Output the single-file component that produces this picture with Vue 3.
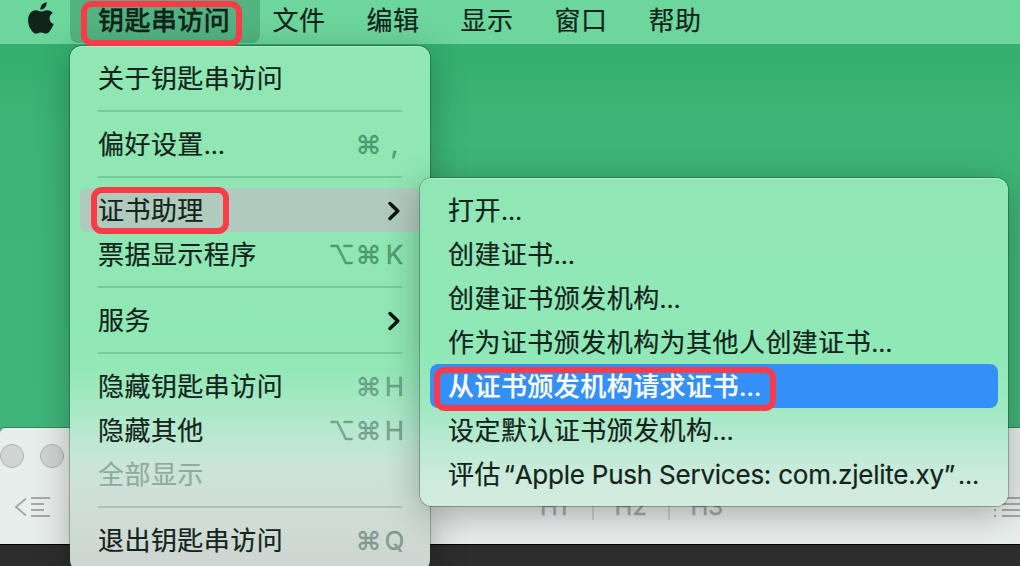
<script setup>
const barItems = ['文件', '编辑', '显示', '窗口', '帮助']

const appMenu = [
  { label: '关于钥匙串访问' },
  { sep: true },
  { label: '偏好设置', tail: '…', keys: ['⌘', ','] },
  { sep: true },
  { label: '证书助理', sub: true, open: true },
  { label: '票据显示程序', keys: ['⌥', '⌘', 'K'] },
  { sep: true },
  { label: '服务', sub: true },
  { sep: true },
  { label: '隐藏钥匙串访问', keys: ['⌘', 'H'] },
  { label: '隐藏其他', keys: ['⌥', '⌘', 'H'] },
  { label: '全部显示', disabled: true },
  { sep: true },
  { label: '退出钥匙串访问', keys: ['⌘', 'Q'] },
]

const assistantMenu = [
  { label: '打开', tail: '…' },
  { label: '创建证书', tail: '…' },
  { label: '创建证书颁发机构', tail: '…' },
  { label: '作为证书颁发机构为其他人创建证书', tail: '…' },
  { label: '从证书颁发机构请求证书', tail: '…', active: true },
  { label: '设定默认证书颁发机构', tail: '…' },
  { label: '评估', latin: '“Apple Push Services: com.zjelite.xy”', tail: '…' },
]
</script>

<template>
  <div class="desktop">
    <header class="menubar">
      <svg class="apple" viewBox="0 0 26 32" width="26" height="32">
        <path d="M18.6 0.2c.3 2-.6 4-1.7 5.400-1.100 1.400-2.900 2.400-4.500 2.200-.3-1.900.6-3.900 1.700-5.200C15.200 1.300 17.100.3 18.600.2z" />
        <path d="M24.900 11.100c-2.200 1.300-3.300 3.200-3.300 5.300 0 2.600 1.500 4.700 4.100 5.700-.6 1.900-1.600 3.800-2.900 5.600-1.400 2-2.700 3.900-4.800 3.900-2 0-2.700-1.200-5-1.200s-3.200 1.200-5.100 1.200c-2.100.1-3.600-2-5-4C.100 23.700-1.100 16.600 1.500 12.200c1.400-2.400 3.800-3.900 6.300-3.900 2.200 0 3.900 1.300 5.300 1.300 1.300 0 3.500-1.500 6-1.400 2.500.1 4.500 1.100 5.800 2.900z" />
      </svg>
      <div class="app-title">钥匙串访问</div>
      <nav class="bar-items">
        <span v-for="b in barItems" :key="b">{{ b }}</span>
      </nav>
    </header>

    <section class="window">
      <div class="lights"><i></i><i></i></div>
      <div class="toolbar">
        <svg class="outdent" width="37" height="22" viewBox="0 0 37 22">
          <path d="M12 2.500 2 11l10 8.500" />
          <path d="M17 2h19M17 8h13M17 14h13M17 20h19" />
        </svg>
        <div class="headings">
          <span>H1</span><b></b><span>H2</span><b></b><span>H3</span>
        </div>
        <svg class="list" width="30" height="22" viewBox="0 0 30 22">
          <path d="M0 2h2M0 8h2M0 14h2M0 20h2M8 2h22M8 8h22M8 14h22M8 20h22" />
        </svg>
      </div>
    </section>
    <div class="dark"></div>

    <div class="menu main">
      <template v-for="(m, i) in appMenu" :key="i">
        <div v-if="m.sep" class="sep"></div>
        <div v-else class="item" :class="{ open: m.open, disabled: m.disabled }">
          <span class="label">{{ m.label }}<span v-if="m.tail" class="tail">{{ m.tail }}</span></span>
          <span v-if="m.keys" class="keys"><kbd v-for="(k, n) in m.keys" :key="n">{{ k }}</kbd></span>
          <svg v-if="m.sub" class="chev" width="14" height="22" viewBox="0 0 14 22">
            <path d="M3 3.500 10.800 11 3 18.500" />
          </svg>
        </div>
      </template>
    </div>

    <div class="menu submenu">
      <div v-for="m in assistantMenu" :key="m.label" class="item" :class="{ active: m.active }">
        <span class="label">{{ m.label }}<span v-if="m.latin" class="latin">{{ m.latin }}</span><span class="tail">{{ m.tail }}</span></span>
      </div>
    </div>

    <div class="mark mark-title"></div>
    <div class="mark mark-assistant"></div>
    <div class="mark mark-request"></div>
  </div>
</template>

<style>
body {
  overflow: hidden;
}
</style>

<style scoped>
.desktop {
  position: relative;
  display: flex;
  flex-direction: column;
  width: 1020px;
  height: 566px;
  overflow: hidden;
  box-sizing: border-box;
  background: linear-gradient(#34af6d 44px, #3db576 130px, #41b67a 428px);
  font-family: Inter, "Noto Sans CJK SC", sans-serif;
  font-size: 26px;
  letter-spacing: 0.45px;
  color: #14241b;
  white-space: nowrap;
}
.menubar {
  flex: none;
  display: flex;
  height: 44px;
  line-height: 42px;
  background: #6dd69d;
  -webkit-text-stroke: 0.2px currentColor;
}
.apple {
  flex: none;
  margin: 2px 16px 0 28px;
  fill: #10241a;
}
.app-title {
  width: 162px;
  height: 43px;
  padding-left: 28px;
  border-radius: 0 0 8px 8px;
  background: #53b481;
  line-height: 41px;
  font-weight: 500;
  -webkit-text-stroke: 0.3px #0f2418;
}
.bar-items {
  display: flex;
  gap: 41.1px;
  margin-left: 12.500px;
}
.window {
  flex: none;
  height: 116px;
  margin-top: 384px;
  border-radius: 5px 0 0 0;
  background: #e8eeec;
  box-shadow: 0 -1px 0 #2f8659;
  box-sizing: border-box;
  padding-top: 16px;
}
.lights {
  display: flex;
  gap: 16px;
}
.lights i {
  width: 24px;
  height: 24px;
  box-sizing: border-box;
  border: 1px solid #aeb3b1;
  border-radius: 50%;
  background: #d0d5d3;
}
.toolbar {
  display: flex;
  align-items: center;
  height: 22px;
  margin-top: 28px;
}
.toolbar svg {
  flex: none;
  fill: none;
  stroke: #a5aaa8;
  stroke-width: 2;
}
.outdent {
  margin-left: 14px;
}
.headings {
  display: flex;
  align-items: center;
  margin-left: 489px;
  width: 452px;
  font-size: 24px;
  letter-spacing: 0;
  color: #a5aaa8;
  line-height: 22px;
}
.headings span {
  width: 52px;
  box-sizing: border-box;
  -webkit-text-stroke: 0.4px currentColor;
}
.headings span + b + span {
  width: 74.500px;
  padding-left: 21px;
}
.headings b {
  width: 1.500px;
  height: 26px;
  background: #ccd1cf;
}
.dark {
  flex: 1;
  background: #2d2d2d;
  border-top: 1px solid #000;
}
.menu {
  position: absolute;
  box-sizing: border-box;
  padding: 10px;
  border-radius: 12px;
}
.main {
  left: 70px;
  top: 46px;
  width: 360px;
  height: 526px;
  background: linear-gradient(#90e7b3 0, #8fe7b3 290px, #93e8b7 325px, #b0e9cb 375px, #c9e6d8 415px, #d0dfd8 455px, #cdd6d1 515px);
  box-shadow: 0 0 0 1px rgba(0, 50, 25, 0.3), 0 8px 36px rgba(0, 0, 0, 0.29), inset 0 1px 0 rgba(255, 255, 255, 0.3);
}
.submenu {
  left: 420px;
  top: 178px;
  width: 588px;
  height: 328px;
  background: linear-gradient(#90e7b5 0, #90e8b7 180px, #a0e9c2 230px, #bbead2 268px, #cdebdd 300px, #d2ecdf 328px);
  box-shadow: 0 0 0 1px rgba(0, 50, 25, 0.3), 0 8px 36px rgba(0, 0, 0, 0.29), inset 0 1px 0 rgba(255, 255, 255, 0.3);
}
.item {
  display: flex;
  align-items: center;
  justify-content: space-between;
  height: 44px;
  box-sizing: border-box;
  line-height: 42px;
  padding: 2px 18px 0;
  border-radius: 8px;
}
.label {
  -webkit-text-stroke: 0.2px currentColor;
}
.latin {
  letter-spacing: -0.23px;
  margin-left: 2.500px;
}
.tail {
  letter-spacing: 0;
  font-size: 24.500px;
}
.latin + .tail {
  margin-left: 3px;
}
.open {
  background: #b0cbbd;
}
.disabled {
  color: #8eac9d;
}
.active {
  background: #348ff6;
  color: #fff;
  font-weight: 500;
}
.sep {
  height: 2px;
  margin: 10px 18px;
  background: rgba(20, 90, 50, 0.2);
}
.keys {
  display: flex;
  margin-right: -5px;
  color: rgba(20, 90, 55, 0.52);
  -webkit-text-stroke: 0.4px currentColor;
}
.item:nth-last-child(-n + 5) .keys {
  color: rgba(40, 75, 60, 0.42);
}
.keys kbd {
  width: 27px;
  font-family: Inter, "Noto Sans CJK SC", sans-serif;
  font-size: 26px;
  letter-spacing: 0;
  text-align: center;
}
.keys kbd:last-child {
  width: 25px;
}
.chev {
  margin-right: 1px;
  fill: none;
  stroke: #0c1410;
  stroke-width: 3.500;
  stroke-linecap: round;
  stroke-linejoin: round;
}
.toolbar .list {
  margin: 0 -2px 0 0;
  position: relative;
  left: 2px;
}
.mark {
  position: absolute;
  box-sizing: border-box;
  border: 6px solid #fd3a48;
  border-radius: 11px;
}
.mark-title {
  left: 81px;
  top: 1px;
  width: 161px;
  height: 45px;
}
.mark-assistant {
  left: 91px;
  top: 187px;
  width: 138px;
  height: 47px;
}
.mark-request {
  left: 434px;
  top: 367px;
  width: 342px;
  height: 44px;
}
</style>
